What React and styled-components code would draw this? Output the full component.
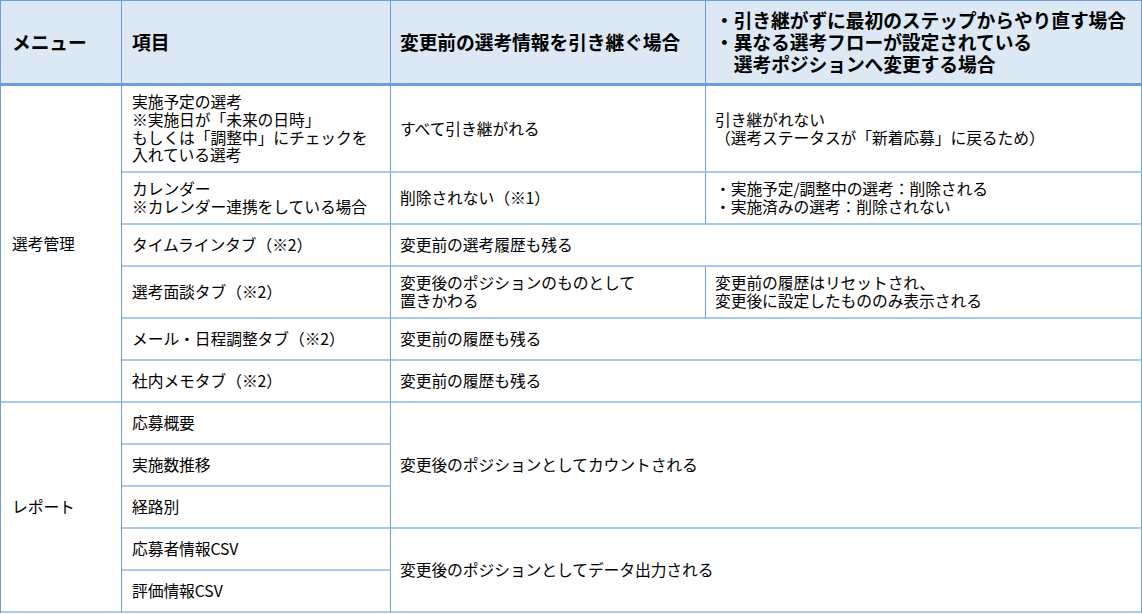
import React from 'react';
import styled, { createGlobalStyle } from 'styled-components';

const GlobalStyle = createGlobalStyle`
  html, body {
    margin: 0;
    padding: 0;
    background: #ffffff;
  }
  body {
    font-family: "Noto Sans CJK JP", "Noto Sans", sans-serif;
    color: #000;
  }
`;

const Table = styled.table`
  border-collapse: separate;
  border-spacing: 0;
  table-layout: fixed;
  width: 1141px;
  border-top: 1px solid #6a9fd6;
  border-left: 1px solid #6a9fd6;
`;

const HeadCell = styled.th`
  background: #dde8f5;
  font-size: 18.8px;
  font-weight: 700;
  line-height: 22px;
  text-align: left;
  vertical-align: middle;
  padding: 0 0 0 ${p => p.$pad || 10}px;
  white-space: nowrap;
  border-right: 1px solid #6a9fd6;
  border-bottom: 3px solid #6a9fd6;
  letter-spacing: -0.1px;
`;

const Indent = styled.span`
  padding-left: 1em;
`;

const Cell = styled.td`
  font-size: 15.8px;
  line-height: 17.8px;
  vertical-align: middle;
  padding: 0 0 0 ${p => p.$pad || 10}px;
  white-space: nowrap;
  border-right: 1px solid #6a9fd6;
  border-bottom: 2px solid #a9c9ea;
  letter-spacing: -0.1px;
`;

const Row = styled.tr`
  height: ${p => p.$h}px;
`;

const rows = [
  { h: 87, item: ['実施予定の選考', '※実施日が「未来の日時」', 'もしくは「調整中」にチェックを', '入れている選考'], keep: ['すべて引き継がれる'], reset: ['引き継がれない', '（選考ステータスが「新着応募」に戻るため）'] },
  { h: 52, item: ['カレンダー', '※カレンダー連携をしている場合'], keep: ['削除されない（※1）'], reset: ['・実施予定/調整中の選考：削除される', '・実施済みの選考：削除されない'] },
  { h: 42, item: ['タイムラインタブ（※2）'], both: ['変更前の選考履歴も残る'] },
  { h: 52, item: ['選考面談タブ（※2）'], keep: ['変更後のポジションのものとして', '置きかわる'], reset: ['変更前の履歴はリセットされ、', '変更後に設定したもののみ表示される'] },
  { h: 42, item: ['メール・日程調整タブ（※2）'], both: ['変更前の履歴も残る'] },
  { h: 42, item: ['社内メモタブ（※2）'], both: ['変更前の履歴も残る'] },
];

const Lines = ({ lines }) =>
  lines.map((l, i) => (
    <React.Fragment key={i}>
      {i > 0 && <br />}
      {l}
    </React.Fragment>
  ));

export default function App() {
  return (
    <>
      <GlobalStyle />
      <Table>
        <colgroup>
          <col style={{ width: 121 }} />
          <col style={{ width: 269 }} />
          <col style={{ width: 315 }} />
          <col style={{ width: 436 }} />
        </colgroup>
        <thead>
          <Row $h={85}>
            <HeadCell $pad={11}>メニュー</HeadCell>
            <HeadCell>項目</HeadCell>
            <HeadCell $pad={9}>変更前の選考情報を引き継ぐ場合</HeadCell>
            <HeadCell $pad={9}>
              ・引き継がずに最初のステップからやり直す場合<br />
              ・異なる選考フローが設定されている<br />
              <Indent>選考ポジションへ変更する場合</Indent>
            </HeadCell>
          </Row>
        </thead>
        <tbody>
          {rows.map((r, i) => (
            <Row $h={r.h} key={i}>
              {i === 0 && (
                <Cell rowSpan={6} $pad={11}>選考管理</Cell>
              )}
              <Cell><Lines lines={r.item} /></Cell>
              {r.both ? (
                <Cell colSpan={2} $pad={9}><Lines lines={r.both} /></Cell>
              ) : (
                <>
                  <Cell $pad={9}><Lines lines={r.keep} /></Cell>
                  <Cell $pad={9}><Lines lines={r.reset} /></Cell>
                </>
              )}
            </Row>
          ))}
          <Row $h={42}>
            <Cell rowSpan={5} $pad={11}>レポート</Cell>
            <Cell>応募概要</Cell>
            <Cell colSpan={2} rowSpan={3} $pad={9}>変更後のポジションとしてカウントされる</Cell>
          </Row>
          <Row $h={42}>
            <Cell>実施数推移</Cell>
          </Row>
          <Row $h={42}>
            <Cell>経路別</Cell>
          </Row>
          <Row $h={42}>
            <Cell>応募者情報CSV</Cell>
            <Cell colSpan={2} rowSpan={2} $pad={9}>変更後のポジションとしてデータ出力される</Cell>
          </Row>
          <Row $h={42}>
            <Cell>評価情報CSV</Cell>
          </Row>
        </tbody>
      </Table>
    </>
  );
}
